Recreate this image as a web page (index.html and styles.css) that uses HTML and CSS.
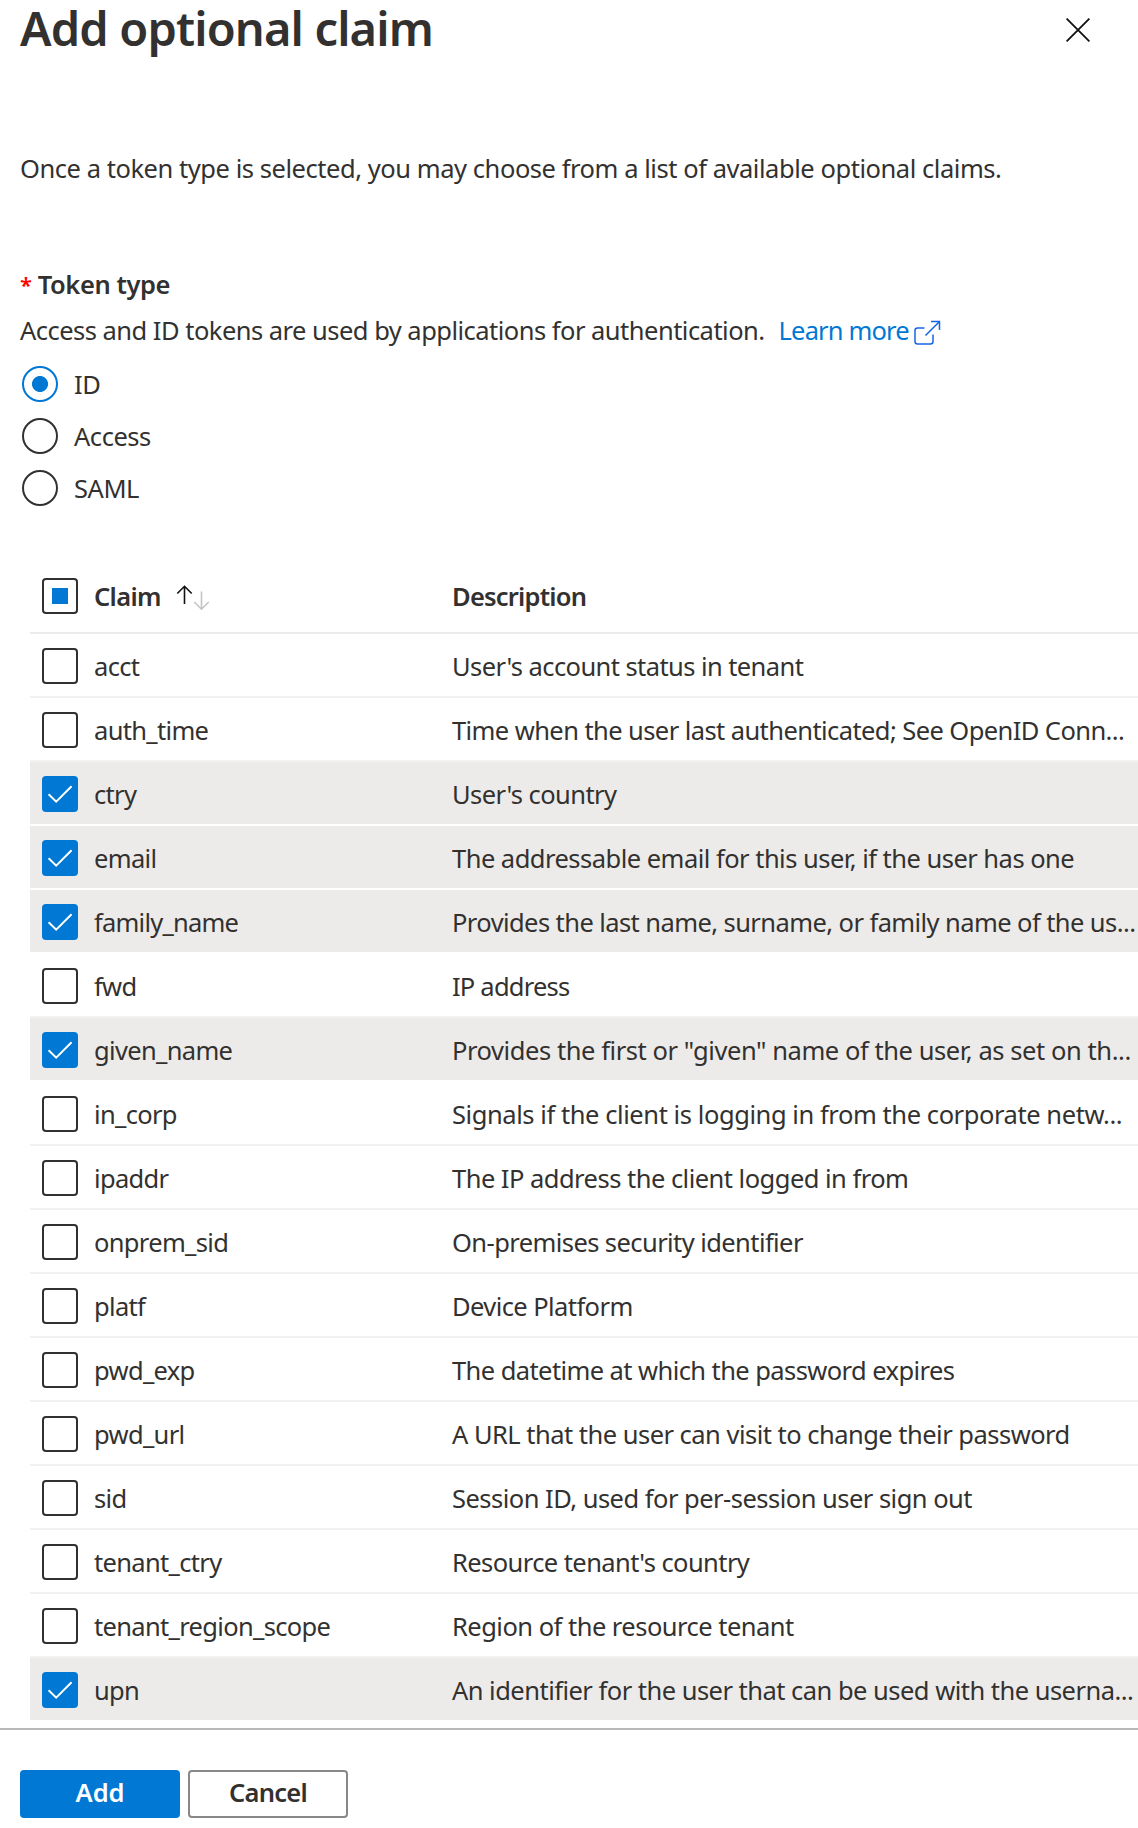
FILE: index.html
```html
<!DOCTYPE html>
<html lang="en">
<head>
<meta charset="utf-8">
<title>Add optional claim</title>
<link rel="stylesheet" href="styles.css">
</head>
<body>
<svg class="sprite" aria-hidden="true">
  <symbol id="check" viewBox="0 0 36 36"><path d="M6.6 18.2 14.2 25.6 29.6 10.2" fill="none" stroke="#fff" stroke-width="2"/></symbol>
</svg>
<div class="panel">
  <header class="panel-header">
    <h1>Add optional claim</h1>
    <button class="close" aria-label="Close">
      <svg width="24" height="24" viewBox="0 0 24 24"><path d="M.6.6 23.4 23.4M23.4.6.6 23.4" fill="none" stroke="#111" stroke-width="1.8"/></svg>
    </button>
  </header>
  <main class="content">
    <p class="intro">Once a token type is selected, you may choose from a list of available optional claims.</p>
    <h2 class="field-label"><span class="required">*</span><span>Token type</span></h2>
    <p class="hint"><span>Access and ID tokens are used by applications for authentication.</span><a class="link" href="#">Learn more<svg width="28" height="28" viewBox="0 0 28 28"><path d="M11.5 9H4.500a2.500 2.500 0 0 0-2.500 2.500V22.500a2.500 2.500 0 0 0 2.500 2.500H17.500a2.500 2.500 0 0 0 2.500-2.500V15.500M12.500 16.500 26.300 2.700M18 2.600h8.500V11" fill="none" stroke="#1664e6" stroke-width="1.5"/></svg></a></p>
    <div class="radios">
      <div class="radio"><span class="circle selected"></span>ID</div>
      <div class="radio"><span class="circle"></span>Access</div>
      <div class="radio"><span class="circle"></span>SAML</div>
    </div>
    <div class="table">
      <div class="row head">
        <span class="box mixed"></span>
        <div class="claim">Claim
          <svg class="sort" width="34" height="26" viewBox="0 0 34 26"><path d="M8.500 19V1.500M1.300 8.500 8.500 1.300 15.700 8.500" fill="none" stroke="#111" stroke-width="1.6"/><path d="M25.500 6.500V24M18.300 17 25.500 24.200 32.700 17" fill="none" stroke="#c4c4c4" stroke-width="1.600"/></svg>
        </div>
        <div class="desc">Description</div>
      </div>
      <div class="row"><span class="box"></span><div class="claim">acct</div><div class="desc tight">User's account status in tenant</div></div>
      <div class="row"><span class="box"></span><div class="claim">auth_time</div><div class="desc tight">Time when the user last authenticated; See OpenID Conn...</div></div>
      <div class="row on"><svg class="box"><use href="#check"/></svg><div class="claim">ctry</div><div class="desc tight">User's country</div></div>
      <div class="row on"><svg class="box"><use href="#check"/></svg><div class="claim">email</div><div class="desc">The addressable email for this user, if the user has one</div></div>
      <div class="row on"><svg class="box"><use href="#check"/></svg><div class="claim narrow">family_name</div><div class="desc tight">Provides the last name, surname, or family name of the us...</div></div>
      <div class="row"><span class="box"></span><div class="claim">fwd</div><div class="desc narrow">IP address</div></div>
      <div class="row on"><svg class="box"><use href="#check"/></svg><div class="claim">given_name</div><div class="desc loose">Provides the first or "given" name of the user, as set on th...</div></div>
      <div class="row"><span class="box"></span><div class="claim">in_corp</div><div class="desc loose">Signals if the client is logging in from the corporate netw...</div></div>
      <div class="row"><span class="box"></span><div class="claim">ipaddr</div><div class="desc">The IP address the client logged in from</div></div>
      <div class="row"><span class="box"></span><div class="claim">onprem_sid</div><div class="desc tight">On-premises security identifier</div></div>
      <div class="row"><span class="box"></span><div class="claim">platf</div><div class="desc tight">Device Platform</div></div>
      <div class="row"><span class="box"></span><div class="claim">pwd_exp</div><div class="desc tight">The datetime at which the password expires</div></div>
      <div class="row"><span class="box"></span><div class="claim">pwd_url</div><div class="desc">A URL that the user can visit to change their password</div></div>
      <div class="row"><span class="box"></span><div class="claim">sid</div><div class="desc">Session ID, used for per-session user sign out</div></div>
      <div class="row"><span class="box"></span><div class="claim">tenant_ctry</div><div class="desc tight">Resource tenant's country</div></div>
      <div class="row"><span class="box"></span><div class="claim">tenant_region_scope</div><div class="desc">Region of the resource tenant</div></div>
      <div class="row on"><svg class="box"><use href="#check"/></svg><div class="claim">upn</div><div class="desc">An identifier for the user that can be used with the userna...</div></div>
    </div>
  </main>
  <footer class="footer">
    <button class="btn primary">Add</button>
    <button class="btn">Cancel</button>
  </footer>
</div>
</body>
</html>
```
FILE: styles.css
```css
* { box-sizing: border-box; }
body {
  margin: 0;
  background: #fff;
  color: #323130;
  font: 25.5px/36px "Noto Sans", sans-serif;
  letter-spacing: -0.45px;
}
h1, h2, p { margin: 0; }
.sprite { display: none; }
.panel {
  display: flex;
  flex-direction: column;
  width: 1138px;
  height: 1828px;
}
.panel-header {
  display: flex;
  justify-content: space-between;
  height: 56px;
  padding: 0 48px 0 20px;
}
h1 {
  font-size: 47px;
  line-height: 57px;
  font-weight: 600;
  letter-spacing: -0.85px;
}
.close {
  display: flex;
  align-self: flex-start;
  margin-top: 18px;
  padding: 0;
  border: 0;
  background: none;
}
.content { flex: 1; white-space: nowrap; }
.intro { margin: 94px 0 0 20px; }
.field-label {
  display: flex;
  gap: 6px;
  margin: 80px 0 0 20px;
  font-size: inherit;
  font-weight: 600;
  letter-spacing: -0.4px;
}
.required { color: #f00; font-size: 22px; }
.hint {
  display: flex;
  gap: 14px;
  margin: 10px 0 0 20px;
}
.hint span { letter-spacing: -0.52px; }
.link {
  display: flex;
  gap: 4px;
  color: #0078d4;
  text-decoration: none;
  letter-spacing: -0.85px;
}
.link svg { margin-top: 7px; }
.radios {
  display: flex;
  flex-direction: column;
  gap: 16px;
  margin: 18px 0 0 22px;
}
.radio { display: flex; gap: 16px; }
.circle {
  width: 36px;
  height: 36px;
  border: 2px solid #323130;
  border-radius: 50%;
}
.circle.selected {
  border-color: #0078d4;
  background: radial-gradient(circle, #0078d4 7.6px, transparent 8.4px);
}
.table { margin: 60px 0 0 30px; }
.row {
  display: grid;
  grid-template-columns: 36px 342px 1fr;
  column-gap: 16px;
  height: 64px;
  padding: 14px 0 0 12px;
  border-bottom: 2px solid #f3f2f1;
}
.head {
  height: 68px;
  padding-top: 12px;
  border-color: #edebe9;
  font-weight: 600;
}
.on { background: #edebe9 padding-box; border-color: #fff; }
.box {
  width: 36px;
  height: 36px;
  border: 2px solid #323130;
  border-radius: 4px;
  background: #fff;
}
.on .box { border: 0; background: #0078d4; }
.box.mixed {
  background: linear-gradient(#0078d4, #0078d4) center / 16px 16px no-repeat;
}
.claim { letter-spacing: -0.67px; }
.claim.narrow { letter-spacing: -0.77px; }
.sort { margin: 0 0 -5px 9px; }
.desc { letter-spacing: -0.52px; }
.desc.tight { letter-spacing: -0.58px; }
.desc.loose { letter-spacing: -0.43px; }
.desc.narrow, .head .desc { letter-spacing: -0.78px; }
.footer {
  display: flex;
  gap: 8px;
  height: 100px;
  padding: 40px 20px 0;
  border-top: 2px solid #b8b8b8;
}
.btn {
  width: 160px;
  height: 48px;
  padding: 0 0 4px;
  border: 2px solid #8a8886;
  border-radius: 4px;
  background: #fff;
  color: #323130;
  font: 600 25.5px/36px "Noto Sans", sans-serif;
  letter-spacing: -0.7px;
}
.primary {
  border-color: #0078d4;
  background: #0078d4;
  color: #fff;
  letter-spacing: -0.1px;
}
```
